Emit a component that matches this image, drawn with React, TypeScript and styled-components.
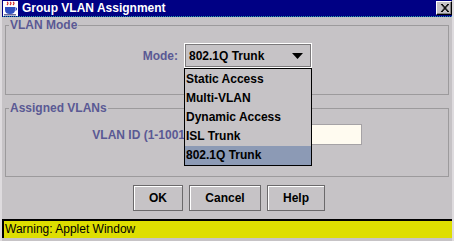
import styled, { createGlobalStyle } from "styled-components"

const GlobalStyle = createGlobalStyle`
  html, body {
    margin: 0;
    padding: 0;
    background: #c6c3c6;
  }
  body {
    font-family: "Liberation Sans", Arial, sans-serif;
  }
`

const Window = styled.div`
  width: 454px;
  height: 241px;
  box-sizing: border-box;
  display: flex;
  flex-direction: column;
  background: #c6c3c6;
  border-left: 2px solid #dedbde;
  border-right: 2px solid #dedbde;
  overflow: hidden;
`

const TitleBar = styled.div`
  height: 16px;
  margin: 0 -2px;
  display: flex;
  align-items: center;
  background: #000084;
  border-bottom: 1px dotted #2aa0a0;
  padding: 0 2px 0 3px;
  gap: 4px;
`

const TitleText = styled.span`
  flex: 1;
  color: #ffffff;
  font-weight: bold;
  font-size: 12px;
  line-height: 16px;
`

const CloseButton = styled.div`
  width: 16px;
  height: 14px;
  box-sizing: border-box;
  display: flex;
  align-items: center;
  justify-content: center;
  background: #c6c3c6;
  border: 1px solid;
  border-color: #ffffff #000000 #000000 #ffffff;
  box-shadow: inset -1px -1px 0 #848284;
`

const Body = styled.div`
  display: flex;
  flex-direction: column;
  padding: 1px 3px 0 3px;
`

const Group = styled.fieldset<{ $pt: number; $pb: number; $mt?: number }>`
  margin: ${(p) => p.$mt ?? 0}px 0 0 0;
  padding: ${(p) => p.$pt}px 0 ${(p) => p.$pb}px 0;
  border: 1px solid #9c9a9c;
  min-width: 0;
`

const GroupTitle = styled.legend`
  margin-left: 3px;
  padding: 0 1px;
  font-weight: bold;
  font-size: 12px;
  line-height: 14px;
  color: #5a5994;
`

const Row = styled.div<{ $labelWidth: number }>`
  display: grid;
  grid-template-columns: ${(p) => p.$labelWidth}px auto;
  column-gap: 6px;
  align-items: center;
`

const Label = styled.span`
  text-align: right;
  font-weight: bold;
  font-size: 12px;
  color: #5a5994;
  white-space: nowrap;
`

const ComboWrap = styled.div`
  position: relative;
  width: 128px;
`

const Combo = styled.div`
  height: 25px;
  box-sizing: border-box;
  display: flex;
  align-items: center;
  justify-content: space-between;
  padding: 0 8px 0 4px;
  border: 1px solid #ffffff;
  box-shadow: inset 0 0 0 1px #7b797b;
  font-weight: bold;
  font-size: 12px;
  color: #000000;
`

const Dropdown = styled.ul`
  position: absolute;
  top: 100%;
  left: 0;
  width: 128px;
  margin: 0;
  padding: 1px 0 0 0;
  list-style: none;
  box-sizing: border-box;
  border: 1px solid #000000;
  background: #c6c3c6;
  z-index: 2;
`

const Option = styled.li<{ $selected?: boolean }>`
  height: 19px;
  line-height: 19px;
  padding-left: 1px;
  font-weight: bold;
  font-size: 12px;
  color: #000000;
  background: ${(p) => (p.$selected ? "#8c9ab5" : "transparent")};
`

const TextField = styled.div`
  width: 163px;
  height: 21px;
  box-sizing: border-box;
  background: #fffbf0;
  border: 1px solid #a5a2a5;
`

const ButtonRow = styled.div`
  display: flex;
  justify-content: center;
  gap: 6px;
  padding: 8px 0 0 4px;
  height: 26px;
`

const Button = styled.div<{ $w: number }>`
  width: ${(p) => p.$w}px;
  height: 26px;
  box-sizing: border-box;
  display: flex;
  align-items: center;
  justify-content: center;
  border: 1px solid #6b696b;
  box-shadow: inset 1px 1px 0 #ffffff;
  font-weight: bold;
  font-size: 12px;
  color: #000000;
`

const Warning = styled.div`
  margin-top: 8px;
  height: 19px;
  box-sizing: border-box;
  background: #dede00;
  border-top: 2px solid #000000;
  border-left: 2px solid #000000;
  padding-left: 1px;
  font-size: 12px;
  line-height: 16px;
  color: #000000;
`

const JavaIcon = () => (
  <svg width="15" height="15" viewBox="0 0 15 15">
    <rect x="0" y="0" width="15" height="15" fill="#ffffff" />
    <path d="M4 1 q2 1 0 3 M7 1 q2 1 0 3 M10 1 q2 1 0 3" stroke="#d02020" strokeWidth="1.2" fill="none" />
    <path d="M2 6 h10 v3 q0 4 -5 4 q-5 0 -5 -4 z" fill="#3050c0" />
    <path d="M12 7 h1.5 v2 h-1.5" stroke="#3050c0" fill="none" />
    <rect x="1" y="13" width="12" height="1.5" fill="#6a6a9a" />
  </svg>
)

const CloseIcon = () => (
  <svg width="9" height="8" viewBox="0 0 9 8">
    <path d="M1 0 L8 8 M8 0 L1 8 M2 0 L9 8 M9 0 L2 8" stroke="#000000" strokeWidth="1" />
  </svg>
)

const Arrow = () => (
  <svg width="11" height="6" viewBox="0 0 11 6">
    <path d="M0 0 H11 L5.5 6 Z" fill="#000000" />
  </svg>
)

const modes = ["Static Access", "Multi-VLAN", "Dynamic Access", "ISL Trunk", "802.1Q Trunk"]

export default function App() {
  const current = "802.1Q Trunk"
  return (
    <>
      <GlobalStyle />
      <Window>
        <TitleBar>
          <JavaIcon />
          <TitleText>Group VLAN Assignment</TitleText>
          <CloseButton>
            <CloseIcon />
          </CloseButton>
        </TitleBar>
        <Body>
          <Group $pt={11} $pb={26}>
            <GroupTitle>VLAN Mode</GroupTitle>
            <Row $labelWidth={172}>
              <Label>Mode:</Label>
              <ComboWrap>
                <Combo>
                  <span>{current}</span>
                  <Arrow />
                </Combo>
                <Dropdown>
                  {modes.map((m) => (
                    <Option key={m} $selected={m === current}>
                      {m}
                    </Option>
                  ))}
                </Dropdown>
              </ComboWrap>
            </Row>
          </Group>
          <Group $pt={9} $pb={31} $mt={6}>
            <GroupTitle>Assigned VLANs</GroupTitle>
            <Row $labelWidth={187}>
              <Label>VLAN ID (1-1001):</Label>
              <TextField />
            </Row>
          </Group>
          <ButtonRow>
            <Button $w={50}>OK</Button>
            <Button $w={72}>Cancel</Button>
            <Button $w={58}>Help</Button>
          </ButtonRow>
        </Body>
        <Warning>Warning: Applet Window</Warning>
      </Window>
    </>
  )
}
